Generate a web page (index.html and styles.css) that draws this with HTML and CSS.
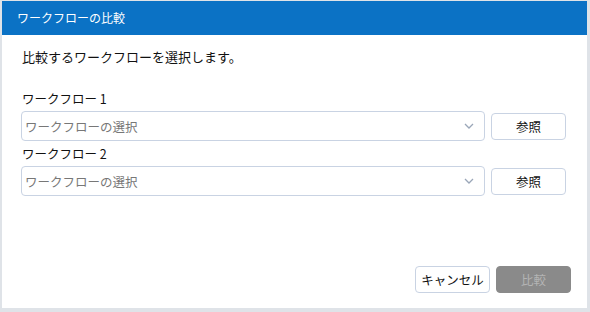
FILE: index.html
```html
<!DOCTYPE html>
<html>
<head>
    <title>ワークフローの比較</title>
    <link rel="stylesheet" href="styles.css">
</head>
<body>
    <div class="dialog">
        <div class="dialog-header">ワークフローの比較</div>
        <div class="dialog-body">
            <p class="intro">比較するワークフローを選択します。</p>
            <div class="field">
                <label class="field-label">ワークフロー 1</label>
                <div class="field-row">
                    <div class="select">
                        <span class="placeholder">ワークフローの選択</span>
                        <svg class="chevron" width="10" height="6" viewBox="0 0 10 6"><path d="M1 1l4 4 4-4" fill="none" stroke="#9aa6b8" stroke-width="1.3"/></svg>
                    </div>
                    <button class="btn">参照</button>
                </div>
            </div>
            <div class="field">
                <label class="field-label">ワークフロー 2</label>
                <div class="field-row">
                    <div class="select">
                        <span class="placeholder">ワークフローの選択</span>
                        <svg class="chevron" width="10" height="6" viewBox="0 0 10 6"><path d="M1 1l4 4 4-4" fill="none" stroke="#9aa6b8" stroke-width="1.3"/></svg>
                    </div>
                    <button class="btn">参照</button>
                </div>
            </div>
        </div>
        <div class="dialog-footer">
            <button class="btn">キャンセル</button>
            <button class="btn btn-disabled" disabled>比較</button>
        </div>
    </div>
</body>
</html>
```

FILE: styles.css
```css
body { margin: 0; background: #dfe3e8; font-family: "Noto Sans CJK JP", "Noto Sans", sans-serif; }
.dialog { margin: 1px 3px 0 2px; height: 307px; background: #fff; display: flex; flex-direction: column; }
.dialog-header { height: 34px; background: #0b72c5; color: #fff; font-size: 12px; line-height: 34px; padding-left: 15px; }
.dialog-body { flex: 1; padding: 0 21px 0 19px; }
.intro { margin: 12px 0 0 1px; font-size: 13px; line-height: 20px; color: #111; }
.field:first-of-type { margin-top: 23px; }
.field-label { display: block; font-size: 12.5px; line-height: 18px; margin-left: 1px; color: #111; }
.field-row { display: flex; align-items: center; gap: 6px; margin-top: 3px; margin-bottom: 4px; }
.select { flex: 1; height: 28px; border: 1px solid #c9d3e3; border-radius: 4px; display: flex; align-items: center; justify-content: space-between; padding: 0 10px 0 3px; }
.placeholder { font-size: 12.5px; color: #777; }
.btn { width: 75px; height: 27px; border: 1px solid #c9d3e3; border-radius: 4px; background: #fff; font-family: inherit; font-size: 12.5px; color: #111; padding: 0; }
.dialog-footer { display: flex; justify-content: flex-end; gap: 6px; padding: 0 16px 15px 0; }
.btn-disabled { width: 75px; background: #8a8a8a; border-color: #8a8a8a; color: #b4b4b4; }
```
